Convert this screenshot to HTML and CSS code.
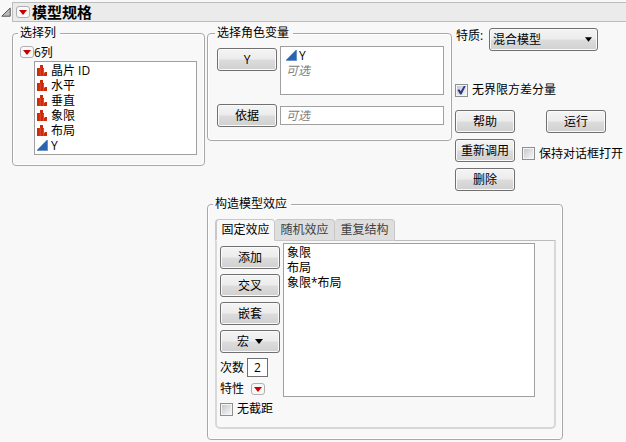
FILE: index.html
```html
<!DOCTYPE html>
<html lang="zh-CN">
<head>
<meta charset="utf-8">
<meta name="viewport" content="width=device-width, initial-scale=1">
<title>模型规格</title>
<link rel="stylesheet" href="styles.css">
</head>
<body>
<svg class="defs" aria-hidden="true">
  <symbol id="bars" viewBox="0 0 11 11"><path d="M0 3h3V0h3v3h1v4.500h1V7h2v4H0z" fill="#cd2a0c"/><path d="M3.200 3v8M6.500 4v7" stroke="#e8735a" stroke-width=".5"/></symbol>
  <symbol id="ramp" viewBox="0 0 11 11"><path d="M0 11V10L9.500 0H11v11z" fill="#8aa5c9"/><path d="M0 10.300L10.300 0v10.300z" fill="#2a62b4"/></symbol>
  <symbol id="down" viewBox="0 0 8 5"><path d="M0 0h8L4 5z"/></symbol>
</svg>
<header class="title">
  <svg class="disclose" viewBox="0 0 10 10"><path d="M.8 9.200L9.200 1v8.200z" fill="#bbb" stroke="#555"/></svg>
  <div class="title-bar">
    <button class="menu" aria-label="模型规格选项"><svg><use href="#down"/></svg></button>
    <h1>模型规格</h1>
  </div>
</header>
<main class="layout">
  <fieldset class="group columns">
    <legend>选择列</legend>
    <div class="count"><button class="menu" aria-label="列选项"><svg><use href="#down"/></svg></button><span>6列</span></div>
    <ul class="list">
      <li><svg><use href="#bars"/></svg>晶片 ID</li>
      <li><svg><use href="#bars"/></svg>水平</li>
      <li><svg><use href="#bars"/></svg>垂直</li>
      <li><svg><use href="#bars"/></svg>象限</li>
      <li><svg><use href="#bars"/></svg>布局</li>
      <li><svg><use href="#ramp"/></svg>Y</li>
    </ul>
  </fieldset>
  <div class="side">
    <div class="top">
      <fieldset class="group roles">
        <legend>选择角色变量</legend>
        <div class="role">
          <button class="btn">Y</button>
          <ul class="list tall"><li><svg><use href="#ramp"/></svg>Y</li><li class="hint">可选</li></ul>
        </div>
        <div class="role">
          <button class="btn">依据</button>
          <ul class="list"><li class="hint">可选</li></ul>
        </div>
      </fieldset>
      <div class="options">
        <div class="personality">
          <label for="personality">特质:</label>
          <div class="pick">
            <select id="personality"><option>混合模型</option></select>
            <svg><use href="#down"/></svg>
          </div>
        </div>
        <label class="check"><input type="checkbox" checked>无界限方差分量</label>
        <div class="actions">
          <button class="btn">帮助</button>
          <button class="btn run">运行</button>
          <button class="btn">重新调用</button>
          <label class="check"><input type="checkbox">保持对话框打开</label>
          <button class="btn">删除</button>
        </div>
      </div>
    </div>
    <fieldset class="group effects">
      <legend>构造模型效应</legend>
      <div class="tabs" role="tablist">
        <button class="tab" role="tab" aria-selected="true">固定效应</button>
        <button class="tab" role="tab" aria-selected="false">随机效应</button>
        <button class="tab" role="tab" aria-selected="false">重复结构</button>
      </div>
      <div class="panel" role="tabpanel">
        <div class="tools">
          <button class="btn">添加</button>
          <button class="btn">交叉</button>
          <button class="btn">嵌套</button>
          <button class="btn">宏<svg><use href="#down"/></svg></button>
          <div class="field"><label for="degree">次数</label><input id="degree" class="number" type="text" value="2"></div>
          <div class="field attr"><span>特性</span><button class="menu" aria-label="特性"><svg><use href="#down"/></svg></button></div>
          <label class="check"><input type="checkbox">无截距</label>
        </div>
        <ul class="list terms"><li>象限</li><li>布局</li><li>象限*布局</li></ul>
      </div>
    </fieldset>
  </div>
</main>
</body>
</html>
```
FILE: styles.css
```css
* { box-sizing: border-box; }

body {
  margin: 0;
  background: #f8f8f8;
  color: #000;
  font: 12px/16px "Open Sans", "Noto Sans CJK SC", sans-serif;
}

button, input, select { font: inherit; color: inherit; }
svg { display: block; flex: none; }
.defs { position: absolute; width: 0; height: 0; }

.title {
  display: flex;
  align-items: center;
  gap: 1px;
  padding: 2px 0 3px 1px;
}
.disclose { width: 10px; height: 10px; }
.title-bar {
  display: flex;
  flex: 1;
  align-items: center;
  gap: 2px;
  height: 20px;
  padding-left: 3px;
  background: #ebebeb;
  border: 1px solid #bcbcbc;
  border-right: 0;
}
h1 { margin: 0; font-size: 15px; line-height: 18px; font-weight: bold; }

.menu {
  display: flex;
  flex: none;
  align-items: center;
  justify-content: center;
  width: 14px;
  height: 12px;
  padding: 0;
  background: #f8f8f8;
  border: 1px solid #b0b0b0;
  border-radius: 3px;
}
.menu svg { width: 8px; height: 5px; fill: #c80000; }

.layout { display: flex; align-items: flex-start; gap: 2px; }
.columns { flex: none; width: 193px; margin-left: 12px; }
.side { flex: 1; min-width: 0; }
.top { display: flex; align-items: flex-start; gap: 3px; }

.group {
  min-width: 0;
  margin-top: 0;
  margin-bottom: 0;
  margin-right: 0;
  padding: 4px 7px 10px;
  border: 1px solid #a8a8a8;
  border-radius: 4px;
  box-shadow: inset 0 0 0 1px #fff;
}
legend { padding: 0 4px 0 2px; margin-left: -2px; background: #f8f8f8; }

.count { display: flex; align-items: center; height: 16px; }
.columns .list { margin-left: 14px; }
.count .menu { margin-bottom: 2px; }

.list {
  margin: 0;
  padding: 1px 2px;
  list-style: none;
  line-height: 15px;
  background: #fff;
  border: 1px solid #a0a0a0;
}
.list li { display: flex; align-items: center; gap: 2px; height: 15px; white-space: nowrap; }
.list svg { width: 11px; height: 11px; }
.columns .list li { gap: 3px; }
.hint { color: #808080; font-style: italic; }

.roles { flex: 1; margin-left: 0; padding: 5px 7px 13px 9px; }
.role { display: flex; align-items: flex-start; gap: 3px; }
.role .btn { margin-top: 2px; }
.role + .role { margin-top: 7px; align-items: center; }
.role + .role .btn { margin-top: 0; }
.role .list { flex: 1; padding-left: 5px; }
.role .tall { height: 49px; }
.role + .role { padding-top: 2px; }

.btn {
  display: flex;
  flex: none;
  align-items: center;
  justify-content: center;
  gap: 6px;
  width: 60px;
  height: 23px;
  padding: 0;
  white-space: nowrap;
  background: linear-gradient(#f4f4f4, #ececec 48%, #dcdcdc 52%, #d0d0d0);
  border: 1px solid #707070;
  border-radius: 3px;
  box-shadow: inset 0 0 0 1px #fafafa;
}
.btn svg { width: 8px; height: 5px; }

.options { flex: none; width: 171px; padding-top: 3px; }
.personality { display: flex; align-items: flex-start; justify-content: space-between; padding: 0 28px 0 1px; }
.pick { position: relative; width: 109px; }
.pick select {
  appearance: none;
  display: block;
  width: 100%;
  height: 23px;
  padding: 0 18px 0 3px;
  background: linear-gradient(#f4f4f4, #ececec 48%, #dcdcdc 52%, #d0d0d0);
  border: 1px solid #707070;
  border-radius: 3px;
  box-shadow: inset 0 0 0 1px #fafafa;
}
.pick svg { position: absolute; right: 6px; top: 9px; width: 7px; height: 5px; pointer-events: none; }

.check { display: flex; align-items: center; gap: 4px; white-space: nowrap; }
.check input {
  appearance: none;
  flex: none;
  width: 13px;
  height: 13px;
  margin: 0;
  padding: 1px;
  background: linear-gradient(135deg, #c4c8ce, #f6f6f6) content-box, #f4f4f4;
  border: 1px solid #8e8f8f;
}
.check input:checked::after {
  content: "";
  display: block;
  width: 9px;
  height: 9px;
  background: #2b3a87;
  clip-path: polygon(5% 50%, 25% 42%, 42% 65%, 78% 0, 100% 0, 50% 100%, 35% 100%);
}
.options > .check { margin-top: 31px; }

.actions {
  display: grid;
  grid-template-columns: 60px 1fr;
  align-items: center;
  gap: 6px 7px;
  margin-top: 12px;
}
.run { margin-left: 24px; }
.actions .check { padding-top: 6px; }

.effects { width: 85%; margin: 5px 0 0; padding: 7px 6px 10px 7px; }
.tabs { display: flex; height: 22px; margin-bottom: -1px; position: relative; }
.tab {
  width: 60px;
  padding: 0;
  white-space: nowrap;
  color: #404040;
  background: #dedede;
  border: 1px solid #c8c8c8;
  border-left-width: 0;
  border-radius: 4px 4px 0 0;
}
.tab[aria-selected="true"] {
  color: #000;
  background: #f8f8f8;
  border-left-width: 2px;
  border-bottom-color: #f8f8f8;
}
.panel {
  display: flex;
  align-items: flex-start;
  gap: 3px;
  padding: 2px 19px 10px 3px;
  border: 2px solid #d8d8d8;
  border-top: 1px solid #bcbcbc;
  border-radius: 0 0 5px 5px;
}
.tools { display: flex; flex-direction: column; gap: 5px; padding-top: 3px; }
.terms { flex: 1; height: 154px; padding-left: 3px; }
.field { display: flex; align-items: center; gap: 3px; height: 19px; }
.attr { height: 14px; gap: 7px; }
.number {
  width: 21px;
  height: 19px;
  padding: 0;
  text-align: center;
  background: #fff;
  border: 1px solid #707070;
}
```
